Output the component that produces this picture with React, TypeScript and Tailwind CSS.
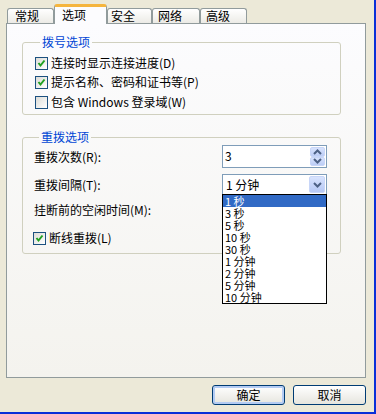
import React from "react";

const tabs = [
  { label: "常规", w: "w-[47px]", pl: "pl-[7px]" },
  { label: "选项", w: "w-[53px]", pl: "pl-[7px]", active: true },
  { label: "安全", w: "w-[45px]", pl: "pl-[3px]" },
  { label: "网络", w: "w-[48px]", pl: "pl-[5px]" },
  { label: "高级", w: "w-[47px]", pl: "pl-[5px]" },
];

const intervals = ["1 秒", "3 秒", "5 秒", "10 秒", "30 秒", "1 分钟", "2 分钟", "5 分钟", "10 分钟"];

const CheckBox = ({ checked }: { checked?: boolean }) => (
  <span className="w-[13px] h-[13px] shrink-0 border border-[#1C5180] bg-gradient-to-br from-[#DCDCD7] to-white flex items-center justify-center">
    {checked && (
      <svg width="9" height="9" viewBox="0 0 9 9">
        <path d="M1.5 4 L3.5 6.5 L7.5 1.5" stroke="#21A121" strokeWidth="2" fill="none" />
      </svg>
    )}
  </span>
);

const CheckRow = ({ checked, label, className = "" }: { checked?: boolean; label: string; className?: string }) => (
  <div className={`h-[16px] flex items-center gap-[3px] ${className}`}>
    <CheckBox checked={checked} />
    <span className="leading-[14px] whitespace-pre">{label}</span>
  </div>
);

const Arrow = ({ up }: { up?: boolean }) => (
  <svg width="9" height="6" viewBox="0 0 9 6">
    <path d={up ? "M1 5 L4.5 1.5 L8 5" : "M1 1 L4.5 4.5 L8 1"} stroke="#4D6185" strokeWidth="2" fill="none" />
  </svg>
);

const XpButton = ({ label, isDefault }: { label: string; isDefault?: boolean }) => (
  <button
    className={`w-[73px] h-[20px] rounded-[3px] border border-[#003C74] bg-gradient-to-b from-white to-[#E6E5DE] flex items-center justify-center leading-[14px] ${
      isDefault ? "shadow-[inset_0_0_0_2px_#B3CBF3]" : ""
    }`}
  >
    {label}
  </button>
);

export default function App() {
  return (
    <div className="w-[376px] h-[414px] bg-[#ECE9D8] border-r-2 border-b-2 border-[#0A2FD8] flex flex-col pl-[6px] pr-[8px] pt-[4px] text-[12px] text-black font-['Noto_Sans_CJK_SC',sans-serif]">
      {/* tabs */}
      <div className="flex items-end h-[19px] pl-[1px] relative z-10">
        {tabs.map((t) =>
          t.active ? (
            <div
              key={t.label}
              className={`${t.w} ${t.pl} h-[20px] -mb-[1px] rounded-t-[3px] border-x border-[#919B9C] border-t-[3px] border-t-[#F5B53E] bg-[#FCFCFE] leading-[14px] pt-[1px]`}
            >
              {t.label}
            </div>
          ) : (
            <div
              key={t.label}
              className={`${t.w} ${t.pl} h-[15px] rounded-t-[3px] border-x border-t border-[#919B9C] bg-gradient-to-b from-white to-[#ECEBE6] leading-[14px]`}
            >
              {t.label}
            </div>
          )
        )}
      </div>

      {/* panel */}
      <div className="h-[355px] border border-[#919B9C] bg-gradient-to-b from-[#FCFCFE] to-[#F4F3EE] flex flex-col pl-[15px] pt-[11px]">
        <fieldset className="w-[319px] border border-[#D0D0BF] rounded-[3px] pl-[12px] pt-[6px] pb-[4px]">
          <legend className="ml-[5px] px-[2px] leading-[14px] text-[#0046D5]">拨号选项</legend>
          <CheckRow checked label="连接时显示连接进度(D)" />
          <CheckRow checked label="提示名称、密码和证书等(P)" className="mt-[3px]" />
          <CheckRow label="包含 Windows 登录域(W)" className="mt-[4px]" />
        </fieldset>

        <fieldset className="w-[319px] mt-[15px] border border-[#D0D0BF] rounded-[3px] pl-[11px] pt-[1px] pb-[7px]">
          <legend className="ml-[5px] px-[2px] leading-[14px] text-[#0046D5]">重拨选项</legend>

          <div className="flex items-center h-[23px]">
            <span className="w-[188px] leading-[14px]">重拨次数(R):</span>
            <div className="w-[105px] h-[23px] border border-[#7F9DB9] bg-white flex justify-between">
              <span className="pl-[2px] pt-[3px] leading-[14px]">3</span>
              <div className="flex flex-col w-[17px] p-[1px] gap-0">
                <div className="h-[10px] rounded-[2px] bg-gradient-to-b from-[#D8E3FD] to-[#BCCDF6] border border-[#C8D6F8] flex items-center justify-center">
                  <Arrow up />
                </div>
                <div className="h-[10px] rounded-[2px] bg-gradient-to-b from-[#D8E3FD] to-[#BCCDF6] border border-[#C8D6F8] flex items-center justify-center">
                  <Arrow />
                </div>
              </div>
            </div>
          </div>

          <div className="flex items-center h-[21px] mt-[6px]">
            <span className="w-[188px] leading-[14px]">重拨间隔(T):</span>
            <div className="relative w-[105px] h-[21px] border border-[#7F9DB9] bg-white flex items-center justify-between">
              <span className="pl-[3px] leading-[14px] whitespace-pre">1 分钟</span>
              <div className="w-[16px] h-[17px] mr-[1px] rounded-[2px] bg-gradient-to-b from-[#D8E3FD] to-[#B6C8F5] border border-[#C8D6F8] flex items-center justify-center">
                <Arrow />
              </div>
              {/* open dropdown list */}
              <div className="absolute top-full -left-[1px] w-[105px] border border-black bg-white flex flex-col z-20">
                {intervals.map((v, i) => (
                  <div
                    key={v}
                    className={`h-[12px] text-[11px] leading-[12px] pl-[2px] whitespace-pre ${
                      i === 0 ? "bg-[#316AC5] text-white" : ""
                    }`}
                  >
                    {v}
                  </div>
                ))}
              </div>
            </div>
          </div>

          <div className="h-[16px] flex items-center mt-[7px]">
            <span className="leading-[14px]">挂断前的空闲时间(M):</span>
          </div>

          <CheckRow checked label="断线重拨(L)" className="mt-[12px] -ml-[1px]" />
        </fieldset>
      </div>

      {/* buttons */}
      <div className="flex justify-end gap-[8px] mt-[7px]">
        <XpButton label="确定" isDefault />
        <XpButton label="取消" />
      </div>
    </div>
  );
}
